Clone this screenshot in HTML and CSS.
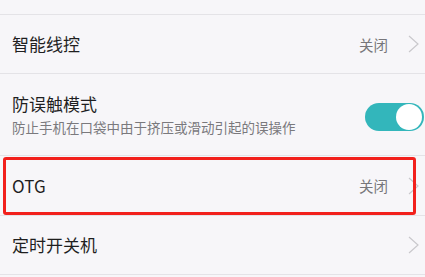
FILE: index.html
```html
<!DOCTYPE html>
<html lang="zh-CN">
<head>
  <meta charset="UTF-8" />
  <title>设置</title>
  <link rel="stylesheet" href="styles.css">
</head>
<body>
  <div class="top-gap"></div>

  <div class="row">
    <div class="row-title">智能线控</div>
    <div class="row-value">关闭</div>
    <svg class="chev" width="11" height="18" viewBox="0 0 11 18"><path d="M1 1 L10 9 L1 17" fill="none" stroke="#c9c8cc" stroke-width="1.2"/></svg>
  </div>

  <div class="row row-tall">
    <div class="row-text">
      <div class="row-title">防误触模式</div>
      <div class="row-sub">防止手机在口袋中由于挤压或滑动引起的误操作</div>
    </div>
    <div class="switch on"><span class="knob"></span></div>
  </div>

  <div class="row row-otg">
    <div class="row-title">OTG</div>
    <div class="row-value">关闭</div>
    <svg class="chev" width="11" height="18" viewBox="0 0 11 18"><path d="M1 1 L10 9 L1 17" fill="none" stroke="#c9c8cc" stroke-width="1.2"/></svg>
    <div class="mark"></div>
  </div>

  <div class="row">
    <div class="row-title">定时开关机</div>
    <svg class="chev" width="11" height="18" viewBox="0 0 11 18"><path d="M1 1 L10 9 L1 17" fill="none" stroke="#c9c8cc" stroke-width="1.2"/></svg>
  </div>
</body>
</html>
```

FILE: styles.css
```css
body {
  margin: 0;
  background: #f7f6f9;
  font-family: "Noto Sans CJK SC", "Noto Sans", sans-serif;
  color: #1f1f1f;
  overflow: hidden;
}

.top-gap {
  height: 14px;
  border-bottom: 1px solid #e4e3e7;
}

.row {
  position: relative;
  display: flex;
  align-items: center;
  height: 58px;
  padding: 0 6px 0 12px;
  border-bottom: 1px solid #e4e3e7;
}

.row-tall {
  height: 81px;
  padding-right: 1px;
}

.row-otg {
  height: 59px;
}

.row-title {
  flex: 1;
  font-size: 17px;
  line-height: 22px;
}

.row-text {
  flex: 1;
  display: flex;
  flex-direction: column;
  gap: 2px;
}

.row-sub {
  font-size: 13.5px;
  line-height: 20px;
  color: #7a797d;
}

.row-value {
  font-size: 14.5px;
  color: #77767a;
  margin-right: 20px;
}

.chev {
  display: block;
}

.switch {
  width: 59px;
  height: 28px;
  border-radius: 14px;
  background: #cfcfd3;
  position: relative;
  margin-top: 4px;
}

.switch.on {
  background: #33b6bb;
}

.knob {
  position: absolute;
  top: 1px;
  right: 2px;
  width: 26px;
  height: 26px;
  border-radius: 50%;
  background: #fff;
}

.mark {
  position: absolute;
  top: 1px;
  bottom: 0;
  left: 3px;
  right: 9px;
  border: 3px solid #f2201c;
  border-radius: 3px;
}
```
